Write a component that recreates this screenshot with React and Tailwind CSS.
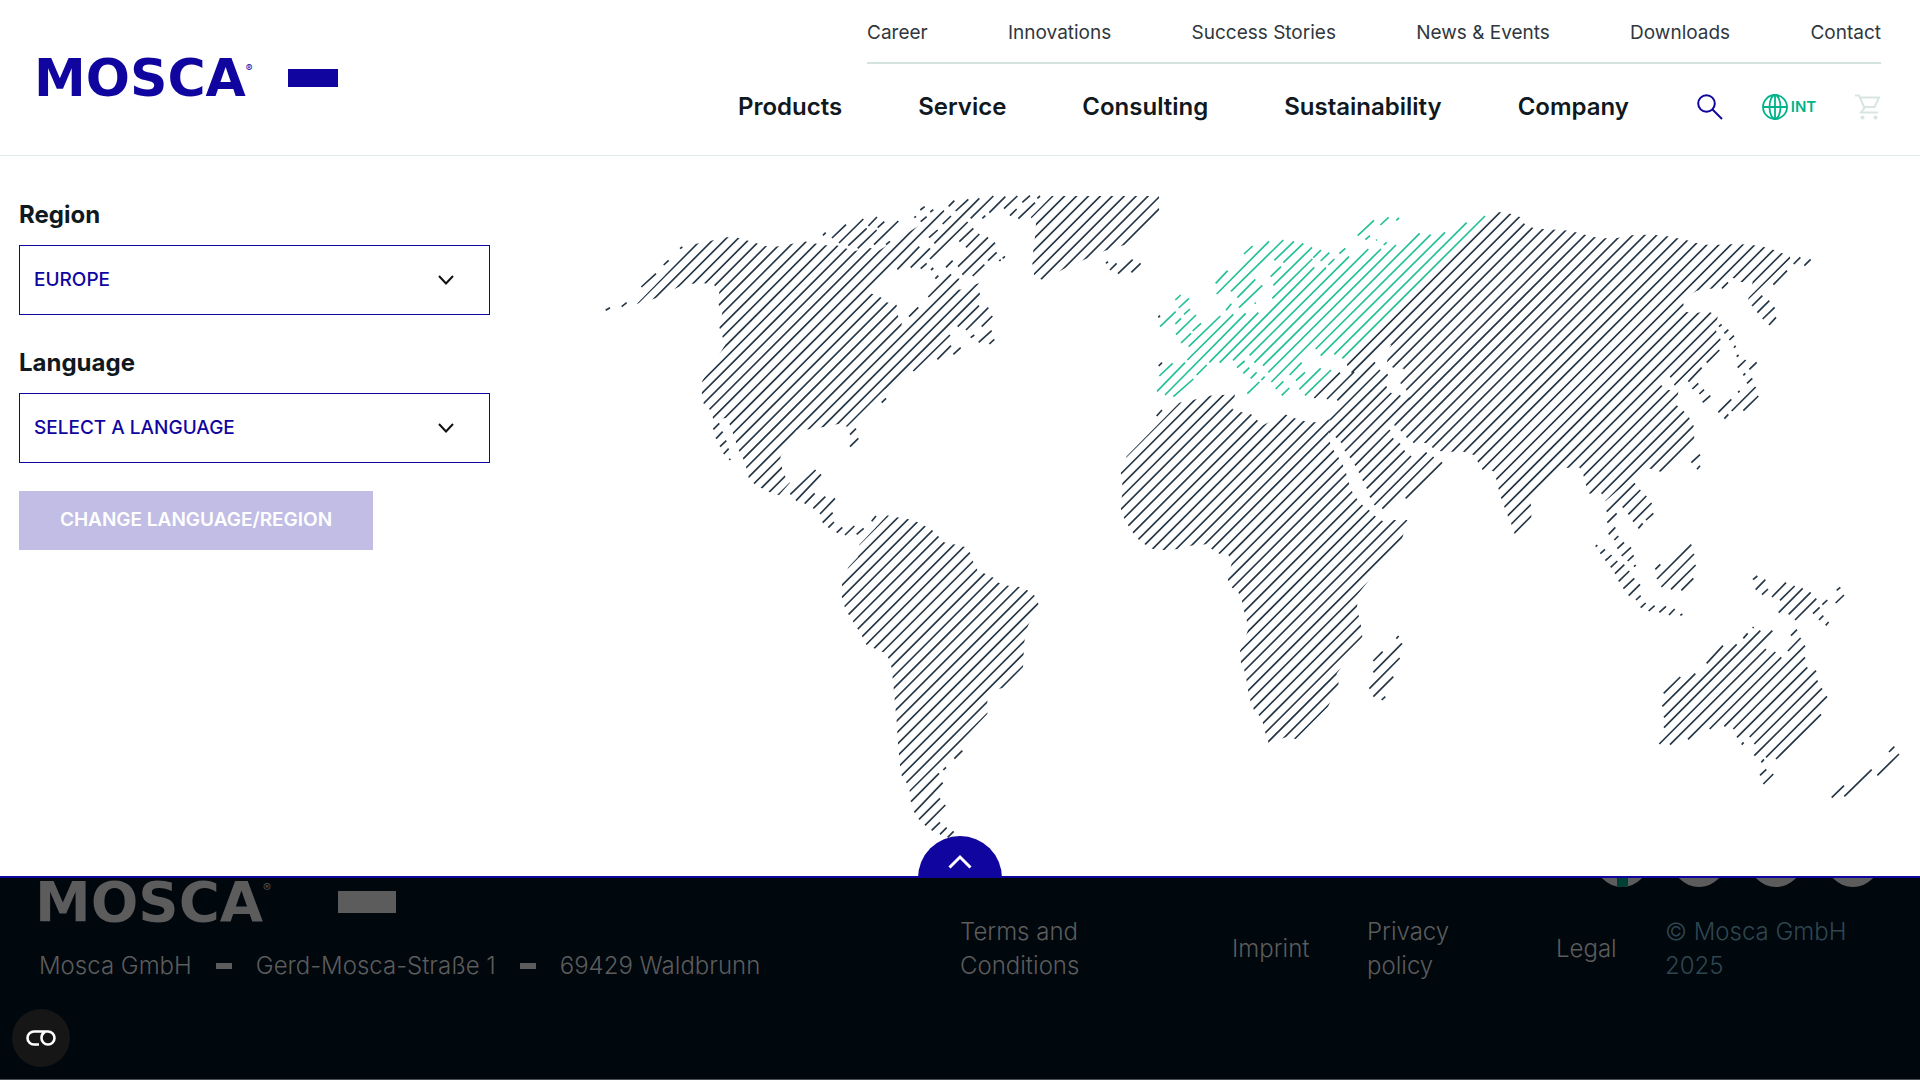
import React, { useState } from 'react';

const SUB_LINKS = ['Career', 'Innovations', 'Success Stories', 'News & Events', 'Downloads', 'Contact'];
const MAIN_LINKS = ['Products', 'Service', 'Consulting', 'Sustainability', 'Company'];

// Hatched land masses: outline polygon + phase (x + y of the first stripe) and stripe distance
const LANDS = [
  {
    id: 'north-america',
    x: -30,
    y: -30,
    phase: 940,
    step: 35.6,
    points:
      '140,372 316,192 363,182 408,172 438,172 496,188 523,198 556,200 600,193 642,184 703,196 740,196 765,204 791,214 840,204 868,211 972,146 1061,90 1066,98 838,340 848,342 870,350 890,367 920,374 923,406 935,430 935,440 1083,300 1108,295 1108,330 1166,310 1170,345 900,625 885,628 772,740 745,732 700,741 658,748 620,750 600,780 571,830 576,863 586,890 600,908 567,946 539,937 515,925 493,912 476,893 469,864 460,837 447,812 438,787 430,763 421,737 409,714 370,718 361,691 341,671 335,635 337,602 405,496 397,469 388,442 397,397 385,372 388,333 373,316 343,310 305,311 264,322 197,355',
  },
  {
    id: 'greenland',
    x: 1500,
    y: -30,
    phase: 85,
    step: 35.8,
    points:
      '-208,112 -145,48 178,48 178,98 75,194 15,212 -100,262 -170,302 -198,284 -203,250 -200,210 -195,170 -192,130',
  },
  {
    id: 'south-america',
    x: 660,
    y: 870,
    phase: 382,
    step: 35.7,
    points:
      '118,194 202,106 231,112 263,117 290,125 313,137 337,151 355,169 372,187 401,193 433,200 451,219 460,247 472,270 497,282 521,293 537,309 565,317 596,320 622,331 643,346 656,372 624,437 613,485 611,521 609,562 548,624 520,630 502,655 502,702 428,779 413,795 270,936 260,909 245,887 240,857 237,825 234,792 232,759 230,724 227,692 224,659 221,625 218,596 215,564 207,537 193,518 167,507 139,494 127,470 113,447 100,426 86,404 74,381 65,353 65,313 85,262 113,232',
  },
  {
    id: 'africa',
    x: 1500,
    y: -30,
    phase: 944,
    step: 35.6,
    points:
      '80,829 238,668 282,659 328,647 366,645 405,643 397,688 421,696 452,701 471,720 490,735 555,703 582,714 610,723 645,727 692,718 685,765 691,792 702,812 716,833 729,856 739,881 747,910 757,936 771,957 788,976 808,991 826,1009 849,1024 884,1020 923,1020 906,1077 774,1242 771,1283 777,1311 783,1338 787,1370 710,1481 716,1512 684,1580 588,1677 557,1672 506,1690 496,1659 489,1630 479,1609 462,1590 452,1565 445,1535 440,1504 433,1471 423,1450 420,1413 444,1351 440,1321 432,1292 426,1264 416,1238 396,1223 383,1198 395,1150 386,1126 361,1123 339,1111 320,1093 282,1095 235,1107 194,1110 159,1107 134,1093 115,1078 99,1058 85,1037 72,1014 62,985 66,945 67,908 62,880',
  },
  {
    id: 'asia',
    x: 1500,
    y: -30,
    phase: 1297,
    step: 35.9,
    points:
      '741,560 741,550 1195,96 1232,101 1262,112 1274,133 1300,144 1331,147 1394,151 1424,156 1481,171 1513,175 1551,174 1594,166 1630,164 1666,165 1702,169 1729,174 1761,181 1790,189 1820,194 1856,194 1893,193 1925,193 1957,195 1988,200 2016,208 2042,218 2071,228 2071,236 1944,360 1958,306 1923,306 1895,292 1866,325 1830,326 1790,332 1748,360 1750,371 1757,396 1790,398 1828,395 1853,409 1848,452 1863,481 1725,619 1710,590 1700,575 1681,600 1683,615 1704,629 1735,635 1729,675 1749,691 1766,710 1781,737 1783,780 1684,876 1652,866 1630,865 1516,964 1503,938 1468,941 1457,913 1450,884 1438,862 1408,863 1395,864 1290,964 1294,980 1294,1018 1245,1065 1233,1030 1222,1004 1212,978 1203,953 1195,925 1189,898 1179,873 1148,870 1134,847 1122,825 1091,815 1060,815 1022,814 998,803 977,789 941,789 920,773 903,753 882,735 930,655 919,630 901,610 912,566 879,563 861,546 870,501 875,494 850,500 757,586 749,560',
  },
];

// Islands and narrow coasts, stripe by stripe
const STRIPES = [
  {
    id: 'arctic',
    x: -30,
    y: -30,
    d: 'M270 206L277 201M221 255L236 241M154 321L198 281M95 380L110 368M47 391L60 383M699 166L707 158M726 174L768 134M747 189L820 117M775 197L830 145M835 138L861 111M803 205L860 150M863 143L883 125M852 194L925 123M888 194L900 184M973 113L978 109M991 90L1004 80M992 125L1010 110M1021 96L1030 89M1017 173L1043 150M1058 132L1083 108M1076 79L1093 62M1097 93L1135 58M1033 190L1168 55M1020 237L1133 126M1142 115L1210 48M1108 185L1150 145M1177 115L1186 107M1198 98L1246 50M1128 202L1168 162M1242 86L1282 48M1104 260L1194 172M1260 107L1280 87M1297 67L1320 47M1117 284L1215 188M1285 116L1335 68M1342 55L1350 48M1148 288L1183 254M1194 242L1220 217M1228 243L1232 239M1238 235L1245 229M1068 262L1088 242M922 268L988 200M962 263L1020 205M992 266L1010 250M1023 270L1030 264M1036 296L1045 287M1015 351L1083 283M957 410L985 382',
  },
  {
    id: 'atlantic-coast',
    x: -30,
    y: -30,
    d: 'M970 573L1080 465M875 668L888 655M1103 440L1167 377M1042 538L1083 497M1128 450L1195 383M1090 523L1112 503M1142 473L1153 465M1175 440L1207 408M1166 487L1205 452M1198 492L1213 478M780 764L798 746M780 800L805 775M370 748L388 730M378 776L398 755M390 800L409 782M401 822L416 806M418 840L421 836M601 943L677 870M618 962L693 883M644 971L674 940M670 985L706 950M690 1002L735 955',
  },
  {
    id: 'central-america',
    x: 660,
    y: 870,
    d: 'M8 128L38 98M25 143L42 126M50 158L67 142M75 165L103 138M110 163L131 145M155 124L168 108M403 836L427 812M370 870L378 862M273 965L357 880M283 997L368 908M297 1018L360 955M315 1036L376 975M335 1051L360 1027M360 1063L380 1043M383 1072L401 1054',
  },
  {
    id: 'iceland',
    x: 1500,
    y: -30,
    d: 'M18 250L24 245M30 270L50 250M54 281L98 239M94 277L122 250M175 412L180 407M176 558L186 548',
  },
  {
    id: 'madagascar',
    x: 1500,
    y: 870,
    d: 'M820 543L848 515M820 577L906 490M808 626L899 534M820 650L880 590M845 660L856 650M889 476L896 468',
  },
  {
    id: 'middle-east',
    x: 1500,
    y: -30,
    d: 'M170 708L186 690M643 654L720 578M681 657L762 576M712 661L825 547M690 720L840 570M686 758L863 583M708 773L860 620M723 788L874 639M735 813L901 646M750 833L930 653M765 856L870 750M777 878L880 775M788 902L900 790M800 925L914 812M810 952L933 828M823 975L980 818M847 986L1001 831M917 955L1026 847',
  },
  {
    id: 'far-east',
    x: 2640,
    y: 30,
    d: 'M726 265L744 247M880 254L921 212M816 318L847 287M832 338L868 302M848 357L884 322M867 375L888 352M941 192L961 172M973 197L992 178M680 488L718 450M625 545L665 503M637 567L655 550M658 582L672 569M668 607L691 587M380 935L465 850M428 923L481 870M382 968L410 940M445 943L499 888M386 1003L406 982M459 965L515 909M403 1020L415 1008M498 960L520 940M475 985L488 970M634 788L660 764M651 808L660 797M717 380L725 373M733 400L745 389M748 420L762 407M762 443L767 437M770 470L776 465M773 503L797 480M808 508L830 487M790 526L796 520M801 550L817 535M774 577L779 573M715 637L754 598M755 633L827 561M733 656L745 643M790 632L835 588',
  },
  {
    id: 'oceania',
    x: 2880,
    y: 930,
    d: 'M172 146L192 127M185 168L213 142M203 183L221 166M222 200L227 195M107 140L112 135M121 161L135 148M136 182L155 165M152 202L172 183M165 221L193 194M176 244L208 213M190 266L223 235M206 287L240 253M228 300L242 287M242 323L257 309M266 333L284 317M298 337L318 319M327 345L344 327M361 346L367 342M286 208L301 193M291 237L394 134M304 261L402 162M333 268L407 195M364 271L400 235M579 239L592 228M587 269L616 239M606 284L624 267M636 291L678 248M660 301L704 258M656 338L728 265M686 343L752 277M705 360L769 296M759 341L779 322M787 314L802 300M777 360L790 347M797 376L806 366M830 271L841 262M827 309L852 285M550 415L563 400M578 384L581 381M440 490L489 437M311 580L361 531M307 619L406 521M312 652L530 433M312 683L601 392M298 732L637 392M330 734L618 447M384 718L646 456M449 687L664 472M493 679L735 437M520 687L735 472M531 712L742 502M569 711L768 512M583 732L773 542M583 767L786 565M618 772L801 589M604 787L612 778M648 777L783 643M545 734L551 727M600 826L619 808M610 852L640 822M693 407L711 389M684 453L722 414M815 893L852 857M853 889L935 809M952 826L1017 762M987 756L1003 740',
  },
];

const EUROPE =
  'M727 535L1155 108M703 523L1100 128M662 527L1035 157M647 507L992 164M514 606L959 160M505 577L888 195M489 557L843 207M463 548L805 207M449 526L747 230M399 541L678 263M359 548L643 262M220 650L280 597M290 585L320 555M328 547L475 398M195 645L437 400M171 634L255 548M262 540L400 403M178 588L218 550M266 500L361 408M350 342L507 184M393 334L550 180M523 241L582 184M412 353L466 298M417 383L487 316M550 248L610 190M512 290L543 260M520 316L636 202M517 355L637 237M640 233L663 210M662 243L688 218M685 255L703 237M718 221L736 205M347 310L383 272M432 222L458 198M378 391L394 371M464 371L467 368M773 167L822 121M841 135L866 112M889 121L897 114M796 179L810 167M828 181L831 179M851 195L860 187M226 360L242 345M236 384L267 355M180 440L227 395M252 403L270 387M226 432L243 415M228 464L288 405M243 489L273 460M278 453L303 430M411 563L434 543M430 580L448 563M452 595L470 577M442 641L478 606M484 600L494 590M527 627L550 604M545 646L568 624M569 585L605 548M588 602L615 577M598 628L662 565M615 646L693 570';

function hatch({ phase, step, points }) {
  const pts = points.split(' ').map((p) => p.split(',').map(Number));
  const sums = pts.map(([x, y]) => x + y);
  const left = Math.min(...pts.map((p) => p[0]));
  const right = Math.max(...pts.map((p) => p[0]));
  const first = Math.ceil((Math.min(...sums) - phase) / step);
  const last = Math.floor((Math.max(...sums) - phase) / step);
  let d = '';
  for (let k = first; k <= last; k++) {
    const sum = phase + k * step;
    d += `M${left} ${sum - left}L${right} ${sum - right}`;
  }
  return d;
}

function WorldMap() {
  return (
    <svg viewBox="0 0 3930 1950" className="w-full h-auto" fill="none" strokeWidth="5" role="img" aria-label="World map">
      <defs>
        {LANDS.map((land) => (
          <clipPath key={land.id} id={land.id}>
            <polygon points={land.points} />
          </clipPath>
        ))}
      </defs>
      <g stroke="#253746">
        {LANDS.map((land) => (
          <g key={land.id} transform={`translate(${land.x} ${land.y})`}>
            <path d={hatch(land)} clipPath={`url(#${land.id})`} />
          </g>
        ))}
        {STRIPES.map((s) => (
          <path key={s.id} d={s.d} transform={`translate(${s.x} ${s.y})`} />
        ))}
      </g>
      <path d={EUROPE} transform="translate(1500 -30)" stroke="#24c097" />
    </svg>
  );
}

function SelectField({ id, label, value, onChange, options }) {
  return (
    <div>
      <label htmlFor={id} className="block mb-3.5 text-2xl leading-8 font-bold">{label}</label>
      <div className="relative">
        <select
          id={id}
          value={value}
          onChange={onChange}
          className="block w-full h-[70px] pl-3.5 pr-16 appearance-none bg-white border border-[#10069f] text-[19px] font-medium uppercase text-[#10069f]"
        >
          {options.map((o) => (
            <option key={o} value={o}>{o}</option>
          ))}
        </select>
        <svg className="absolute right-9 top-[30px] w-4 h-[10px] pointer-events-none" viewBox="0 0 16 10" fill="none" stroke="#111" strokeWidth="2">
          <path d="M1 1l7 7.5L15 1" />
        </svg>
      </div>
    </div>
  );
}

export default function App() {
  const [region, setRegion] = useState('Europe');
  const [language, setLanguage] = useState('Select a language');

  return (
    <div className="min-h-screen flex flex-col bg-white text-[#101820] font-['Inter','Liberation_Sans',sans-serif]">
      <header className="flex justify-between pl-[34px] pr-[39px] h-[156px] border-b border-[#e3eaea]">
        <a href="#" className="self-center flex items-center w-[304px] text-[#10069f]">
          <span className="text-[52px] leading-8 font-bold font-['DejaVu_Sans',sans-serif]">MOSCA</span>
          <span className="self-start text-[10px] leading-3">®</span>
          <span className="ml-auto w-[50px] h-[18px] bg-[#10069f]"></span>
        </a>

        <div className="flex flex-col items-end">
          <nav className="flex justify-between items-center w-[1014px] h-16 pt-1 border-b-2 border-[#d3e3de] text-[19px] font-normal text-[#30373e]">
            {SUB_LINKS.map((link) => (
              <a key={link} href="#">{link}</a>
            ))}
          </nav>
          <div className="flex items-center justify-between w-[1143px] h-[86px]">
            <nav className="flex justify-between w-[891px] text-2xl leading-8 font-semibold">
              {MAIN_LINKS.map((link) => (
                <a key={link} href="#">{link}</a>
              ))}
            </nav>
            <div className="flex items-center justify-between w-[184px]">
              <button type="button" aria-label="Search">
                <svg className="w-[26px] h-[26px]" viewBox="0 0 26 26" fill="none" stroke="#10069f" strokeWidth="2">
                  <circle cx="9.5" cy="9.5" r="8.3" />
                  <path d="M15.5 15.5L25 25" />
                </svg>
              </button>
              <button type="button" className="flex items-center gap-[3px] text-[15px] font-semibold text-[#00b388]">
                <svg className="w-[26px] h-[26px]" viewBox="0 0 26 26" fill="none" stroke="#00b388" strokeWidth="1.8">
                  <circle cx="13" cy="13" r="12" />
                  <ellipse cx="13" cy="13" rx="5.5" ry="12" />
                  <path d="M13 1v24M1 13h24" />
                </svg>
                <span>INT</span>
              </button>
              <button type="button" aria-label="Cart">
                <svg className="w-[26px] h-[26px]" viewBox="0 0 26 26" fill="none" stroke="#d7e6e1" strokeWidth="2">
                  <path d="M0 1.500h4L9.500 14l-3.500 4.500H23M5.500 3.500H24L19.500 13H9.500" />
                  <circle cx="7.500" cy="23.500" r="2" fill="#d7e6e1" stroke="none" />
                  <circle cx="20.500" cy="23.500" r="2" fill="#d7e6e1" stroke="none" />
                </svg>
              </button>
            </div>
          </div>
        </div>
      </header>

      <section className="relative z-10 flex gap-[110px] pl-[19px] pr-[10px] pt-[34px] pb-9 border-b-2 border-[#10069f]">
        <form className="shrink-0 w-[471px] pt-[9px]">
          <div className="flex flex-col gap-8">
            <SelectField
              id="region"
              label="Region"
              value={region}
              onChange={(e) => setRegion(e.target.value)}
              options={['Europe', 'North America', 'South America', 'Asia', 'Africa']}
            />
            <SelectField
              id="language"
              label="Language"
              value={language}
              onChange={(e) => setLanguage(e.target.value)}
              options={['Select a language', 'English', 'Deutsch']}
            />
          </div>
          <button type="submit" disabled className="mt-7 w-[354px] h-[59px] bg-[#c1bde5] text-[19px] font-semibold uppercase whitespace-nowrap text-white">
            Change language/region
          </button>
        </form>
        <div className="flex-1 min-w-0">
          <WorldMap />
        </div>
        {/* close tab sits on the lower edge of the panel */}
        <button
          type="button"
          aria-label="Close"
          className="absolute bottom-[-2px] left-1/2 -translate-x-1/2 w-[84px] h-[42px] flex justify-center pt-[18px] rounded-t-full bg-[#10069f]"
        >
          <svg className="w-6 h-[15px]" viewBox="0 0 24 15" fill="none" stroke="#fff" strokeWidth="3">
            <path d="M1.500 13.500L12 3l10.500 10.500" />
          </svg>
        </button>
      </section>

      <footer className="relative flex-1 flex bg-[#00070d] border-b border-[#4b4f52] text-2xl leading-[34px] font-light text-[#5c5c5c]">
        <div className="w-1/2 pl-[39px] pt-1">
          <div className="flex items-center w-[357px] h-10">
            <span className="-ml-1 text-[56px] leading-10 font-bold font-['DejaVu_Sans',sans-serif]">MOSCA</span>
            <span className="self-start text-xs leading-3">®</span>
            <span className="ml-auto w-[58px] h-[22px] bg-[#5c5c5c]"></span>
          </div>
          <div className="flex items-center gap-6 mt-[27px] whitespace-nowrap">
            <span>Mosca GmbH</span>
            <span className="w-4 h-1.5 bg-[#5c5c5c]"></span>
            <span>Gerd-Mosca-Straße 1</span>
            <span className="w-4 h-1.5 bg-[#5c5c5c]"></span>
            <span>69429 Waldbrunn</span>
          </div>
        </div>
        <div className="w-1/2">
          <div className="flex items-end justify-end gap-[23px] h-[9px] pr-10 overflow-hidden">
            <a href="#" aria-label="Xing" className="shrink-0 flex justify-center w-[54px] h-[54px] rounded-full overflow-hidden bg-[#5c5c5c]">
              <span className="w-[11px] h-full bg-[#004034]"></span>
            </a>
            <a href="#" aria-label="LinkedIn" className="shrink-0 w-[54px] h-[54px] rounded-full bg-[#5c5c5c]"></a>
            <a href="#" aria-label="YouTube" className="shrink-0 w-[54px] h-[54px] rounded-full bg-[#5c5c5c]"></a>
            <a href="#" aria-label="Instagram" className="shrink-0 w-[54px] h-[54px] rounded-full bg-[#5c5c5c]"></a>
          </div>
          <div className="grid grid-cols-[272fr_135fr_189fr_109fr_255fr] items-center mt-7">
            <a href="#" className="w-36">Terms and Conditions</a>
            <a href="#">Imprint</a>
            <a href="#" className="w-24">Privacy policy</a>
            <a href="#">Legal</a>
            <span className="w-48 text-[#2f4650]">© Mosca GmbH 2025</span>
          </div>
        </div>
        <button type="button" aria-label="Cookie settings" className="absolute left-3 bottom-3 flex items-center justify-center w-[58px] h-[58px] rounded-full bg-[#161616]">
          <svg className="w-[30px] h-4" viewBox="0 0 30 16" fill="none" stroke="#fff" strokeWidth="2.600">
            <path d="M13 14.500H8a6.500 6.500 0 0 1 0-13h14a6.500 6.500 0 1 1-6.500 6.500c0-3 1.500-5 3.500-6" />
          </svg>
        </button>
      </footer>
    </div>
  );
}
